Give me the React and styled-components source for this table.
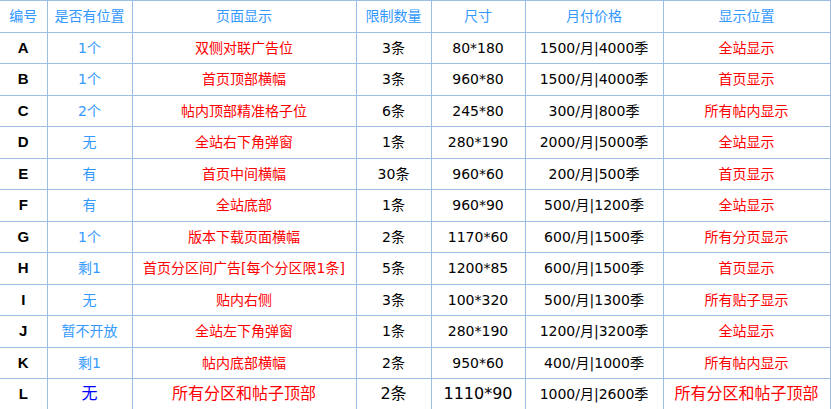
import React from 'react';
import styled, { createGlobalStyle } from 'styled-components';

const GlobalStyle = createGlobalStyle`
  html, body {
    margin: 0;
    padding: 0;
    background: #ffffff;
    overflow: hidden;
  }
  body {
    font-family: "DejaVu Sans", "Noto Sans CJK SC", sans-serif;
  }
`;

const palette = {
  border: '#9dbde3',
  head: '#3399ff',
  soft: '#3399ff',
  deep: '#0000ff',
  red: '#ff0000',
  black: '#000000',
};

const Table = styled.table`
  width: 830px;
  border-collapse: collapse;
  table-layout: fixed;
  border-top: 1px solid ${palette.border};
  border-right: 1px solid ${palette.border};
`;

const Row = styled.tr`
  height: 31.5px;
`;

const Cell = styled.td`
  border-left: 1px solid ${palette.border};
  border-bottom: 1px solid ${palette.border};
  padding: 0;
  text-align: center;
  vertical-align: middle;
  white-space: nowrap;
  line-height: 20px;
  font-size: ${(p) => (p.$big ? '16px' : '14px')};
  color: ${(p) => p.$color || palette.black};
  &:first-child {
    border-left: none;
  }
`;

const HeadCell = styled.th`
  border-left: 1px solid ${palette.border};
  border-bottom: 1px solid ${palette.border};
  padding: 0;
  font-weight: normal;
  font-size: 14px;
  line-height: 20px;
  color: ${palette.head};
  text-align: center;
  vertical-align: middle;
  &:first-child {
    border-left: none;
  }
`;

const Code = styled(Cell)`
  font-family: "Liberation Sans", Arial, sans-serif;
  font-weight: bold;
  font-size: 15px;
`;

const cols = [47, 85, 224, 75, 94, 138, 167];
const heads = ['编号', '是否有位置', '页面显示', '限制数量', '尺寸', '月付价格', '显示位置'];

const rows = [
  ['A', '1个', '双侧对联广告位', '3条', '80*180', '1500/月|4000季', '全站显示'],
  ['B', '1个', '首页顶部横幅', '3条', '960*80', '1500/月|4000季', '首页显示'],
  ['C', '2个', '帖内顶部精准格子位', '6条', '245*80', '300/月|800季', '所有帖内显示'],
  ['D', '无', '全站右下角弹窗', '1条', '280*190', '2000/月|5000季', '全站显示'],
  ['E', '有', '首页中间横幅', '30条', '960*60', '200/月|500季', '首页显示'],
  ['F', '有', '全站底部', '1条', '960*90', '500/月|1200季', '全站显示'],
  ['G', '1个', '版本下载页面横幅', '2条', '1170*60', '600/月|1500季', '所有分页显示'],
  ['H', '剩1', '首页分区间广告[每个分区限1条]', '5条', '1200*85', '600/月|1500季', '首页显示'],
  ['I', '无', '贴内右侧', '3条', '100*320', '500/月|1300季', '所有贴子显示'],
  ['J', '暂不开放', '全站左下角弹窗', '1条', '280*190', '1200/月|3200季', '全站显示'],
  ['K', '剩1', '帖内底部横幅', '2条', '950*60', '400/月|1000季', '所有帖内显示'],
  ['L', '无', '所有分区和帖子顶部', '2条', '1110*90', '1000/月|2600季', '所有分区和帖子顶部'],
];

export default function App() {
  return (
    <>
      <GlobalStyle />
      <Table>
        <colgroup>
          {cols.map((w, i) => (
            <col key={i} style={{ width: w }} />
          ))}
        </colgroup>
        <thead>
          <Row>
            {heads.map((h) => (
              <HeadCell key={h}>{h}</HeadCell>
            ))}
          </Row>
        </thead>
        <tbody>
          {rows.map((r, i) => {
            const big = i === rows.length - 1;
            return (
              <Row key={r[0]}>
                <Code>{r[0]}</Code>
                <Cell $big={big} $color={big ? palette.deep : palette.soft}>{r[1]}</Cell>
                <Cell $big={big} $color={palette.red}>{r[2]}</Cell>
                <Cell $big={big}>{r[3]}</Cell>
                <Cell $big={big}>{r[4]}</Cell>
                <Cell>{r[5]}</Cell>
                <Cell $big={big} $color={palette.red}>{r[6]}</Cell>
              </Row>
            );
          })}
        </tbody>
      </Table>
    </>
  );
}
